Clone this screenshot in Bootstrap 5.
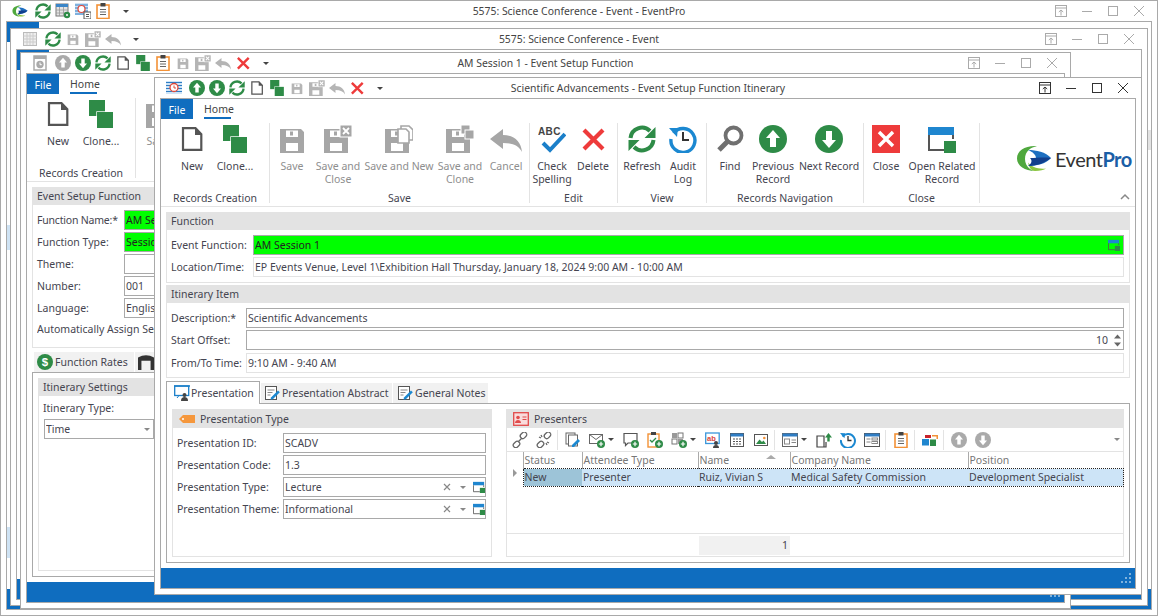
<!DOCTYPE html>
<html lang="en">
<head>
<meta charset="utf-8">
<title>EventPro</title>
<link href="https://cdn.jsdelivr.net/npm/bootstrap@5.3.0/dist/css/bootstrap.min.css" rel="stylesheet">
<style>
html,body{margin:0;padding:0;background:#fff;overflow:hidden;}
body{width:1158px;height:616px;position:relative;font-family:"Noto Sans","Liberation Sans",sans-serif;font-size:10.5px;line-height:13px;color:#454550;}
svg{display:block;flex:none;}
.win{position:absolute;background:#fff;border:1px solid #a9a9a9;display:flex;flex-direction:column;}
.win-a{left:0;top:0;width:1158px;height:616px;z-index:1;}
.win-b{left:10px;top:28px;width:1138px;height:578px;z-index:2;}
.win-c{left:20px;top:52px;width:1051px;height:557px;z-index:3;}
.win-d{left:154px;top:77px;width:988px;height:518px;z-index:4;}
.tbar{height:20px;display:grid;grid-template-columns:1fr auto 1fr;align-items:center;flex:none;}
.ttl{white-space:nowrap;color:#444;font-size:10.4px;padding-top:1px;}
.qat{display:flex;align-items:center;gap:4px;padding-left:11px;}
.qat svg{width:16px;height:16px;}
.qat svg:first-child{margin-right:3px;}
.qat .qc{margin-left:8px;}
.qc,.tcar{width:0;height:0;border-left:3px solid transparent;border-right:3px solid transparent;border-top:3px solid #444;flex:none;}
.wbtns{display:flex;justify-content:flex-end;align-items:center;gap:14px;padding-right:12px;color:#aaa;}
.wbtns svg{width:12px;height:12px;}
.win-d .wbtns{color:#333;}
.client{flex:1;margin:0 5px 5px 5px;border:1px solid #a9a9a9;display:flex;flex-direction:column;min-height:0;overflow:hidden;position:relative;}
.wmain{flex:1;min-height:0;overflow:hidden;}
.stbar{height:20px;background:#0f6dbf;flex:none;display:flex;justify-content:flex-end;align-items:center;padding-right:3px;}
.grip{width:12px;height:10px;}
.rtabs.nav{height:20px;flex-wrap:nowrap;}
.rfile{width:32px;height:20px;background:#0f6dbf;color:#fff;text-align:center;line-height:23px;}
.rhome{margin-left:11px;width:27px;height:20px;line-height:21px;border-bottom:2px solid #0f6dbf;color:#444;white-space:nowrap;}
.ribbon{height:88px;border-bottom:1px solid #e3e3e3;display:flex;padding-top:4px;align-items:flex-start;}
.rgrp{height:80px;border-right:1px solid #e3e3e3;display:flex;flex-direction:column;flex:none;}
.rg1{width:109px;padding-left:11px;}
.rg2{width:260px;}
.rg3{width:88px;}
.rg4{width:89px;padding-left:2px;}
.rg5{width:157px;padding-left:1px;}
.rg6{width:116px;}
.rrow{display:flex;flex:1;}
.rlab{height:13px;text-align:center;white-space:nowrap;color:#454550;margin-bottom:-2px;}
.rg1 .rlab{margin-left:-11px;}
.rg4 .rlab{margin-left:-2px;}
.rg5 .rlab{margin-left:-1px;}
.rbtn.btn{padding:2px 0 0 0;border:0;border-radius:0;font-size:10.5px;line-height:13px;color:#454550;display:flex;flex-direction:column;align-items:center;text-align:center;flex:none;white-space:nowrap;}
.rbtn svg{width:28px;height:28px;margin-bottom:7px;}
.rbtn.off{color:#8e8e8e;}
.rbtn svg.wid32{width:32px;}
.w38{width:38px;}.w40{width:40px;}.w42{width:42px;}.w44{width:44px;}.w46{width:46px;}.w48{width:48px;}.w68{width:68px;}.w70{width:70px;}.w74{width:74px;}
.rlogo{flex:1;display:flex;flex-direction:column;height:80px;padding:22px 3px 0 36px;}
.logo-row{display:flex;align-items:center;gap:3px;}
.logo-row svg{width:36px;height:27px;}
.logo-txt{font-family:"Lato","Liberation Sans",sans-serif;font-size:20px;line-height:26px;color:#333;letter-spacing:-.5px;white-space:nowrap;padding-top:1px;}
.logo-txt b{color:#1b5ea6;font-weight:700;}
.chev{margin-left:auto;margin-top:auto;width:10px;height:7px;margin-right:2px;margin-bottom:3px;}
.wbody{padding:5px 5px 5px 5px;}
.pnl.card{border:1px solid #e3e3e3;border-radius:0;background:#fff;margin-bottom:2px;}
.pnl .card-header{background:#e3e3e3;border:0;border-radius:0;height:17px;flex:none;padding:0 4px 1px;line-height:15px;color:#454550;display:flex;align-items:center;gap:5px;}
.pnl .card-body{padding:5px 5px 5px 4px;}
.pnl.panel-it .card-body{padding-bottom:0;}
.frow{display:flex;height:20px;margin-bottom:2px;line-height:20px;align-items:center;}
.frow:last-child{margin-bottom:0;}
.frow-lo{margin-top:3px;}
.flab{flex:none;white-space:nowrap;}
.tight{letter-spacing:-.2px;}
.l82{width:82px;}.l75{width:75px;}.l106{width:106px;}.l87{width:87px;}
.fld.form-control{flex:1;min-width:0;height:20px;min-height:0;border:1px solid #a9a9a9;border-radius:0;padding:0 0 0 1px;font-size:10.5px;line-height:18px;color:#454550;background:#fff;display:flex;align-items:center;white-space:nowrap;box-shadow:none;}
.fld.ro{border-color:#e3e3e3;}
.fld.grn{background:#00ff00;color:#222;}
.fld-t{flex:1;overflow:hidden;}
.fld svg{width:12px;height:12px;}
.fld .mr3{margin-right:3px;}
.win-c .frow .fld.form-control{flex:none;width:31px;overflow:hidden;}
.win-c .auto{width:117px;overflow:hidden;}
.spin{width:8px;margin:0 1px 0 6px;display:flex;flex-direction:column;gap:3px;}
.spin svg{width:7px;height:5px;}
.panel-fn{height:71px;}
.panel-it{height:93px;}
.dtabs.nav{flex-wrap:nowrap;border:0;height:22px;align-items:flex-end;margin-top:3px;}
.dtab{height:20px;background:#f1f1f1;display:flex;align-items:center;gap:2px;padding:0 0 0 3px;margin-right:1px;white-space:nowrap;}
.dtab svg{width:16px;height:16px;}
.dtab.on{height:23px;background:#fff;border:1px solid #a9a9a9;border-bottom:0;margin-bottom:-1px;position:relative;z-index:1;padding:0 0 0 7px;gap:1px;}
.dw1{width:94px;}.dw2{width:131px;}.dw3{width:95px;padding-left:4px;}
.dpane{border:1px solid #a9a9a9;height:160px;display:flex;padding:5px;gap:14px;}
.pnl2.card{height:148px;margin:0;}
.pl{width:320px;flex:none;}
.pr{flex:1;min-width:0;display:flex;flex-direction:column;}
.pnl2 .card-header{height:18px;padding:0 4px 0 6px;}
.pnl2 .card-header svg{width:16px;height:14px;}
.pnl2.pl .card-body{padding:5px 5px 0 4px;}
.gtools{height:24px;display:flex;align-items:center;padding-left:5px;flex:none;border-bottom:1px solid #e3e3e3;}
.gi{width:16px;height:16px;margin-right:8px;}
.gsep{width:1px;height:20px;background:#e3e3e3;margin:0 7px 0 -3px;flex:none;}
.tcar{margin-left:-5px;margin-right:9px;}
.tend{margin-left:auto;margin-right:3px;border-top-color:#888;}
.gt.table{margin:0;width:616px;table-layout:fixed;font-size:10.5px;--bs-table-bg:transparent;color:#454550;}
.gt th,.gt td{padding:0 0 0 1px;border:0;font-weight:400;white-space:nowrap;height:16px;line-height:16px;overflow:hidden;box-shadow:none;}
.gt thead th{color:#777;height:16px;line-height:16px;position:relative;}
.gt .hs{border-left:1px solid #aaa;}
.gt tbody td{height:18px;line-height:16px;background:#cde4f7;border-top:1px dotted #222;border-bottom:1px dotted #222;}
.gt tbody td.gind{background:#fff;border:0;padding:0;}
.gt tbody td.gsel{background:#9dc4d8;border-left:1px dotted #222;}
.gt tbody td:last-child{border-right:1px dotted #222;}
.tri-r{width:0;height:0;border-top:4px solid transparent;border-bottom:4px solid transparent;border-left:4px solid #999;margin-left:6px;}
.tri-u{position:absolute;right:14px;top:3px;width:0;height:0;border-left:5px solid transparent;border-right:5px solid transparent;border-bottom:4px solid #aaa;}
.gspc{flex:1;}
.gfoot{height:23px;border-top:1px solid #e3e3e3;padding:2px 0 1px 192px;flex:none;}
.gsum{width:91px;height:19px;background:#f1f1f1;text-align:right;padding-right:2px;line-height:19px;}
.bit{position:absolute;background:#cfe3f4;}
.bit1{left:0;top:203px;width:3px;height:25px;}
.bit2{left:0;top:505px;width:3px;height:31px;}
.bit3{right:0;top:108px;width:3px;height:20px;background:#e3e3e3;}
.cbody{padding:5px;}
.cp1{height:161px;}
.ctabs.nav{flex-wrap:nowrap;height:20px;margin-top:4px;border:0;padding-left:2px;align-items:flex-end;}
.ctw1{width:100px;padding-left:3px;}.ctw2{width:19px;}
.cpane{border:1px solid #a9a9a9;height:205px;padding:5px;}
.cp2{height:193px;margin:0;}
.cp2 .card-body{padding:2px 5px 0 4px;}
.csel{margin:-1px 0 0 1px;width:110px;flex:none;}
.auto{height:20px;line-height:18px;white-space:nowrap;}
</style>
</head>
<body>
<svg width="0" height="0" style="position:absolute">
<defs>
<symbol id="i-new" viewBox="0 0 28 28"><path d="M5 3.2h12.5l5.800 6v15.600H5z" fill="#fff" stroke="#555" stroke-width="2.200"/><path d="M17 2.500v7.500h7z" fill="#555"/></symbol>
<symbol id="i-clone" viewBox="0 0 28 28"><rect x="2" y="0" width="16" height="16" fill="#2e8b47"/><rect x="10" y="12" width="16" height="16" fill="#2e8b47" stroke="#fff" stroke-width="1.400" paint-order="stroke"/></symbol>
<symbol id="i-save" viewBox="0 0 28 28"><path fill="currentColor" fill-rule="evenodd" d="M2 4h21l3 3v21H2zM8 5.500v6.500h12V5.500zM8 18v8h12v-8z"/><rect x="12" y="6.500" width="3" height="4" fill="currentColor"/></symbol>
<symbol id="i-savex" viewBox="0 0 28 28"><path fill="currentColor" fill-rule="evenodd" d="M0 4h24v24H0zM6 5.500v6.500h12V5.500zM6 18v8h12v-8z"/><rect x="10" y="6.500" width="3" height="4" fill="currentColor"/><rect x="16" y="0" width="12" height="12" fill="currentColor" stroke="#fff"/><path d="M19 3l6 6M25 3l-6 6" stroke="#fff" stroke-width="1.800"/></symbol>
<symbol id="i-saven" viewBox="0 0 28 28"><path fill="currentColor" fill-rule="evenodd" d="M0 4h24v24H0zM6 5.500v6.500h12V5.500zM6 18v8h12v-8z"/><rect x="10" y="6.500" width="3" height="4" fill="currentColor"/><path d="M16 1h8l4 4v10H16z" fill="#fff" stroke="currentColor" stroke-width="1.600"/><path d="M13 4h8l3 3v11H13z" fill="#fff" stroke="currentColor" stroke-width="1.600"/></symbol>
<symbol id="i-savec" viewBox="0 0 28 28"><path fill="currentColor" fill-rule="evenodd" d="M0 4h24v24H0zM6 5.500v6.500h12V5.500zM6 18v8h12v-8z"/><rect x="10" y="6.500" width="3" height="4" fill="currentColor"/><rect x="15" y="0" width="9" height="9" fill="currentColor" stroke="#fff"/><rect x="19" y="5" width="9" height="9" fill="currentColor" stroke="#fff"/></symbol>
<symbol id="i-undo" viewBox="0 0 32 28"><path fill="currentColor" d="M0 14L13 4v6c11 0 18 6 19 17-3-6-9-9-19-9v6z"/></symbol>
<symbol id="i-abc" viewBox="0 0 28 28"><text x="0" y="10" font-family="Liberation Sans,sans-serif" font-weight="700" font-size="10" fill="#444" letter-spacing=".4">ABC</text><path d="M5 18l7 7L27 9" fill="none" stroke="#1b7fc9" stroke-width="4"/></symbol>
<symbol id="i-x" viewBox="0 0 28 28"><path d="M5 5l19 19M24 5L5 24" fill="none" stroke="#ee3b3b" stroke-width="4.200"/></symbol>
<symbol id="i-ref" viewBox="0 0 28 28"><g fill="none" stroke="#2e8b47" stroke-width="4"><path d="M2.500 13A11.500 11.500 0 0 1 22 6"/><path d="M25.500 15A11.500 11.500 0 0 1 6 22"/></g><path fill="#2e8b47" d="M27.500 2v11h-11zM.5 26V15h11z"/></symbol>
<symbol id="i-audit" viewBox="0 0 28 28"><path d="M4.500 8A12 12 0 1 1 2 14" fill="none" stroke="#1b88d1" stroke-width="3.400"/><path d="M0 3l9 0-1 9z" fill="#1b88d1"/><path d="M14 7v8h6" fill="none" stroke="#333" stroke-width="2"/></symbol>
<symbol id="i-find" viewBox="0 0 28 28"><circle cx="17.500" cy="10.500" r="8" fill="none" stroke="#707070" stroke-width="3.800"/><path d="M11.500 16.500L3 25" stroke="#707070" stroke-width="5"/></symbol>
<symbol id="i-up" viewBox="0 0 28 28"><circle cx="14" cy="14" r="14" fill="currentColor"/><path fill="#fff" d="M14 5l7 8h-4v9h-6v-9H7z"/></symbol>
<symbol id="i-down" viewBox="0 0 28 28"><circle cx="14" cy="14" r="14" fill="currentColor"/><path fill="#fff" d="M14 23l-7-8h4V6h6v9h4z"/></symbol>
<symbol id="i-close" viewBox="0 0 28 28"><rect width="28" height="28" fill="#ee3b3b"/><path d="M7 7l14 14M21 7L7 21" stroke="#fff" stroke-width="3.400"/></symbol>
<symbol id="i-rel" viewBox="0 0 28 28"><rect x="0" y="2" width="26" height="8" fill="#1f86cf"/><path d="M1 10v15h15" fill="none" stroke="#555" stroke-width="2"/><path d="M25 10v4" stroke="#555" stroke-width="2"/><rect x="16" y="16" width="12" height="12" fill="#2e8b47"/></symbol>
<symbol id="i-clip" viewBox="0 0 16 16"><rect x="2" y="2" width="12" height="13.500" fill="#fff" stroke="#f39237" stroke-width="1.600"/><rect x="5.500" y="0" width="5" height="3.500" fill="#444"/><path d="M5 6.500h6M5 9h6M5 11.500h6" stroke="#666" stroke-width="1"/></symbol>
<symbol id="i-griddoc" viewBox="0 0 16 16"><rect x="1" y="1" width="12" height="12" fill="#e4e4e4" stroke="#777"/><rect x="1" y="1" width="12" height="3" fill="#3b86c8"/><path d="M4.500 4v9M8.500 4v9M1 7h12M1 10h12" stroke="#999" stroke-width=".8"/><circle cx="12" cy="12" r="3.200" fill="#2e8b47"/><circle cx="12" cy="12" r="1" fill="#fff"/></symbol>
<symbol id="i-grayg" viewBox="0 0 16 16"><rect x="1.500" y="1.500" width="13" height="13" fill="#eee" stroke="#bbb"/><path d="M1.500 5h13M1.500 8h13M1.500 11h13M5 2v12M8 2v12M11 2v12" stroke="#ccc"/></symbol>
<symbol id="i-sched" viewBox="0 0 16 16"><rect x="0" y="1" width="16" height="13" fill="#cfe4f6"/><path d="M0 2.500h16M0 5.500h16M0 8.500h16M0 11.500h16" stroke="#2f7dc4" stroke-width="1.100"/><circle cx="8" cy="7.500" r="4" fill="#fff" stroke="#e04a3b" stroke-width="1.300"/><path d="M8 5.500v2.500h2" stroke="#e04a3b" fill="none"/></symbol>
<symbol id="i-sched2" viewBox="0 0 16 16"><rect x="0" y="0" width="13" height="12" fill="#cfe4f6"/><path d="M0 2h13M0 5h13M0 8h13M0 11h13" stroke="#2f7dc4"/><circle cx="6.500" cy="6" r="3.500" fill="#fff" stroke="#e04a3b" stroke-width="1.200"/><rect x="9" y="9" width="7" height="7" fill="#fff" stroke="#555"/><path d="M11 11.500h3M11 13.500h3" stroke="#555"/></symbol>
<symbol id="i-clockdoc" viewBox="0 0 16 16"><rect x="2" y="1" width="12" height="14" fill="#fff" stroke="#aaa" stroke-width="1.500"/><rect x="2" y="1" width="12" height="3" fill="#aaa"/><circle cx="8" cy="9.500" r="3.700" fill="#aaa"/><path d="M8 7.500v2.200h1.800" stroke="#fff" fill="none"/></symbol>
<symbol id="i-logo" viewBox="0 0 36 27"><path d="M19 1C8 1 1 6 1 13.500S9 26 19 26c-3 0-10-4-10-12S15 2 21 1.500z" fill="#4fa83d"/><path d="M19 26c5 0 9-1 11-2.500-8 1-15-2-18-6 1 5 3 8 7 8.500z" fill="#8cc63f"/><path d="M12 5c8 0 18 2 23 8-5 6-15 8-23 8 5-2 8-5 8-8s-3-6-8-8z" fill="#1e6fc0"/><path d="M14 13c6 0 14-1 21 0-6 5-15 8-23 8 3-2 5-5 2-8z" fill="#123f8c"/></symbol>
<symbol id="i-pin" viewBox="0 0 12 12"><rect x=".5" y=".5" width="11" height="11" fill="none" stroke="currentColor"/><path d="M.5 3h11M6 10.500V5M3.800 7L6 5l2.200 2" fill="none" stroke="currentColor"/></symbol>
<symbol id="i-min" viewBox="0 0 12 12"><path d="M1 6.500h10" stroke="currentColor"/></symbol>
<symbol id="i-max" viewBox="0 0 12 12"><rect x="1.500" y="1.500" width="9" height="9" fill="none" stroke="currentColor"/></symbol>
<symbol id="i-wx" viewBox="0 0 12 12"><path d="M1 1l10 10M11 1L1 11" stroke="currentColor" fill="none"/></symbol>
<symbol id="i-pres" viewBox="0 0 16 16"><rect x=".7" y="1" width="14" height="9.500" fill="#fff" stroke="#1b7fc9" stroke-width="1.300"/><path d="M0 1h16" stroke="#1b7fc9" stroke-width="1.500"/><circle cx="10.500" cy="10" r="2" fill="#444"/><path d="M7 16c0-3 1.500-4 3.500-4s3.500 1 3.500 4z" fill="#444"/><path d="M3 13l2-2.500" stroke="#1b7fc9"/></symbol>
<symbol id="i-note" viewBox="0 0 16 16"><rect x="1.500" y="1.500" width="11" height="13" fill="#fff" stroke="#555"/><path d="M3.500 5h7M3.500 7.500h5M3.500 10h3" stroke="#888"/><path d="M7 12.500l7-7 1.800 1.800-7 7-2.300.5z" fill="#1b88d1"/></symbol>
<symbol id="i-tag" viewBox="0 0 16 14"><path d="M0 7l4-4h12v8H4z" fill="#f5973c"/><circle cx="4" cy="7" r="1" fill="#fff"/></symbol>
<symbol id="i-card" viewBox="0 0 16 14"><rect x=".7" y=".7" width="14.600" height="12.600" fill="#f9dcdc" stroke="#e14b4b" stroke-width="1.300"/><circle cx="5" cy="5.500" r="1.800" fill="#e14b4b"/><path d="M2 11c0-2 1.500-3 3-3s3 1 3 3z" fill="#e14b4b"/><path d="M9.500 5h4M9.500 7.500h4" stroke="#e14b4b"/></symbol>
<symbol id="i-link" viewBox="0 0 16 16"><g fill="none" stroke="#666" stroke-width="1.300"><rect x="8" y=".8" width="7" height="5" rx="2.400" transform="rotate(-45 11.500 3.300)"/><rect x="1" y="10" width="7" height="5" rx="2.400" transform="rotate(-45 4.500 12.500)"/><path d="M6 10l4-4"/></g></symbol>
<symbol id="i-unlink" viewBox="0 0 16 16"><g fill="none" stroke="#666" stroke-width="1.300"><rect x="8" y=".8" width="7" height="5" rx="2.400" transform="rotate(-45 11.500 3.300)"/><rect x="1" y="10" width="7" height="5" rx="2.400" transform="rotate(-45 4.500 12.500)"/><path d="M5 3l1 2M3 5l2 1M11 13l-1-2M13 11l-2-1"/></g></symbol>
<symbol id="i-copy" viewBox="0 0 16 16"><rect x="1" y="1" width="9" height="11" fill="#fff" stroke="#666"/><rect x="3.500" y="3" width="9" height="11" fill="#fff" stroke="#666"/><path d="M7 13l6-6 2 2-6 6H7z" fill="#1b88d1"/></symbol>
<symbol id="i-mail" viewBox="0 0 16 16"><rect x=".5" y="2.500" width="13" height="9" fill="#fff" stroke="#666"/><path d="M.5 2.500l6.500 5 6.500-5" fill="none" stroke="#666"/><circle cx="12" cy="12" r="4" fill="#2e8b47"/><path d="M12 9.800v4.400M9.800 12h4.400" stroke="#fff" stroke-width="1.200"/></symbol>
<symbol id="i-cmt" viewBox="0 0 16 16"><path d="M1 1.500h13V11H5l-2.500 2.500V11H1z" fill="#fff" stroke="#555" stroke-width="1.200"/><circle cx="12" cy="12" r="4" fill="#2e8b47"/><path d="M12 9.800v4.400M9.800 12h4.400" stroke="#fff" stroke-width="1.200"/></symbol>
<symbol id="i-clipc" viewBox="0 0 16 16"><rect x="1" y="2" width="11" height="13" fill="#fff" stroke="#f39237" stroke-width="1.400"/><rect x="4" y="0" width="5" height="3" fill="#444"/><path d="M3 8l2 2 4-4" fill="none" stroke="#2e8b47" stroke-width="1.300"/><circle cx="12" cy="12" r="4" fill="#2e8b47"/><path d="M12 9.800v4.400M9.800 12h4.400" stroke="#fff" stroke-width="1.200"/></symbol>
<symbol id="i-gridp" viewBox="0 0 16 16"><rect x="1" y="1" width="5" height="5" fill="#999"/><rect x="7" y="1" width="5" height="5" fill="#fff" stroke="#777"/><rect x="1" y="7" width="5" height="5" fill="#fff" stroke="#777"/><rect x="7" y="7" width="5" height="5" fill="#999"/><circle cx="12" cy="12" r="4" fill="#2e8b47"/><path d="M12 9.800v4.400M9.800 12h4.400" stroke="#fff" stroke-width="1.200"/></symbol>
<symbol id="i-scr" viewBox="0 0 16 16"><rect x=".7" y="1" width="13.500" height="10.500" fill="#fff" stroke="#3b96da" stroke-width="1.300"/><text x="2" y="8.500" font-family="Liberation Sans,sans-serif" font-weight="700" font-size="7.500" fill="#d9423a">ab</text><circle cx="11" cy="11" r="2" fill="#444"/><path d="M8 16c0-2 1-3 3-3s3 1 3 3z" fill="#444"/></symbol>
<symbol id="i-tbl" viewBox="0 0 16 16"><rect x="1.500" y="1.500" width="13" height="13" fill="#fff" stroke="#555"/><rect x="1.500" y="1.500" width="13" height="3" fill="#2f7dc4"/><path d="M4 7h2M7 7h2M10 7h2M4 9.500h2M7 9.500h2M10 9.500h2M4 12h2M7 12h2M10 12h2" stroke="#555" stroke-width="1.200"/></symbol>
<symbol id="i-img" viewBox="0 0 16 16"><rect x="1.500" y="2.500" width="13" height="11" fill="#fff" stroke="#555"/><path d="M3 12l3.500-4.500L9 10l1.500-1.500L13 12z" fill="#2e8b47"/><circle cx="11.300" cy="6" r="1.300" fill="#f39237"/></symbol>
<symbol id="i-wnd" viewBox="0 0 16 16"><rect x=".5" y="1.500" width="15" height="13" fill="#fff" stroke="#666"/><rect x=".5" y="1.500" width="15" height="3" fill="#2f7dc4"/><rect x="2.500" y="7" width="5" height="5" fill="none" stroke="#888"/><path d="M9.500 8h4.500M9.500 10.500h4.500" stroke="#888"/></symbol>
<symbol id="i-docup" viewBox="0 0 16 16"><path d="M1 4h7v11H1z M10 10v5H5" fill="#fff" stroke="#444" stroke-width="1.200"/><path d="M9 5.500l3.500-4.500L16 5.500h-2.300v4h-2.400v-4z" fill="#2e8b47"/></symbol>
<symbol id="i-hist" viewBox="0 0 16 16"><path d="M2.500 4.500A7 7 0 1 1 1 8" fill="none" stroke="#1b88d1" stroke-width="2"/><path d="M0 1l5 .3-.5 5z" fill="#1b88d1"/><path d="M8 4v4.500h3.500" fill="none" stroke="#333" stroke-width="1.300"/></symbol>
<symbol id="i-form" viewBox="0 0 16 16"><rect x=".5" y="1.500" width="15" height="13" fill="#fff" stroke="#555"/><rect x=".5" y="1.500" width="15" height="3" fill="#2f7dc4"/><path d="M2.500 7h4M2.500 10h4" stroke="#888"/><rect x="8" y="6" width="5.500" height="2" fill="none" stroke="#888"/><rect x="8" y="9.500" width="5.500" height="2" fill="none" stroke="#888"/></symbol>
<symbol id="i-blocks" viewBox="0 0 16 12"><rect x="0" y="5" width="7" height="6.500" fill="#1f86cf"/><rect x="8" y="5.500" width="6" height="6.500" fill="#2e8b47"/><rect x="3" y="1" width="6" height="3" fill="#c8232c"/><path d="M10 1h6v4h-1.500V2.500H10z" fill="#f39237"/></symbol>
<symbol id="i-grip" viewBox="0 0 12 10"><g fill="#7fb2dd"><rect x="9" y="0" width="2" height="2"/><rect x="5" y="4" width="2" height="2"/><rect x="9" y="4" width="2" height="2"/><rect x="1" y="8" width="2" height="2"/><rect x="5" y="8" width="2" height="2"/><rect x="9" y="8" width="2" height="2"/></g></symbol>
<symbol id="i-chev" viewBox="0 0 10 7"><path d="M1 6l4-4 4 4" fill="none" stroke="#888" stroke-width="1.500"/></symbol>
<symbol id="i-cx" viewBox="0 0 12 12"><path d="M3 3l6 6M9 3l-6 6" stroke="#888" stroke-width="1.200"/></symbol>
<symbol id="i-ctri" viewBox="0 0 12 12"><path d="M3 5h6L6 8z" fill="#888"/></symbol>
<symbol id="i-spu" viewBox="0 0 7 5"><path d="M3.500 .5L7 4.500H0z" fill="#666"/></symbol>
<symbol id="i-spd" viewBox="0 0 7 5"><path d="M3.500 4.500L0 .5h7z" fill="#666"/></symbol>
<symbol id="i-fn" viewBox="0 0 14 14"><circle cx="7" cy="7" r="7" fill="#2e8b47"/><text x="7" y="10.500" text-anchor="middle" font-family="Liberation Sans,sans-serif" font-weight="700" font-size="10" fill="#fff">$</text></symbol>
<symbol id="i-seat" viewBox="0 0 14 14"><path d="M0 3q7-4 14 0v11h-3V6H3v8H0z" fill="#333"/></symbol>
</defs>
</svg>

<!-- outermost window -->
<div class="win win-a">
  <div class="tbar">
    <div class="qat"><svg viewBox="0 0 36 27"><use href="#i-logo"/></svg><svg><use href="#i-ref"/></svg><svg><use href="#i-griddoc"/></svg><svg><use href="#i-sched2"/></svg><svg><use href="#i-clip"/></svg><span class="qc"></span></div>
    <div class="ttl">5575: Science Conference - Event - EventPro</div>
    <div class="wbtns"><svg><use href="#i-pin"/></svg><svg><use href="#i-min"/></svg><svg><use href="#i-max"/></svg><svg><use href="#i-wx"/></svg></div>
  </div>
  <div class="client">
    <div class="wmain"><div class="rtabs nav"><div class="rfile">File</div></div></div>
    <i class="bit bit1"></i><i class="bit bit2"></i><i class="bit bit3"></i>
    <div class="stbar"></div>
  </div>
</div>

<!-- second window -->
<div class="win win-b">
  <div class="tbar">
    <div class="qat"><svg><use href="#i-grayg"/></svg><svg><use href="#i-ref"/></svg><svg viewBox="-4 -4 36 36" style="color:#b5b5b5"><use href="#i-save" width="28" height="28"/></svg><svg style="color:#b5b5b5"><use href="#i-savex"/></svg><svg style="color:#b5b5b5"><use href="#i-undo"/></svg><span class="qc"></span></div>
    <div class="ttl">5575: Science Conference - Event</div>
    <div class="wbtns"><svg><use href="#i-pin"/></svg><svg><use href="#i-min"/></svg><svg><use href="#i-max"/></svg><svg><use href="#i-wx"/></svg></div>
  </div>
  <div class="client">
    <div class="wmain"><div class="rtabs nav"><div class="rfile">File</div></div></div>
    <div class="stbar"></div>
  </div>
</div>

<!-- third window -->
<div class="win win-c">
  <div class="tbar">
    <div class="qat"><svg><use href="#i-clockdoc"/></svg><svg style="color:#aaa"><use href="#i-up"/></svg><svg style="color:#2e8b47"><use href="#i-down"/></svg><svg><use href="#i-ref"/></svg><svg><use href="#i-new"/></svg><svg><use href="#i-clone"/></svg><svg><use href="#i-clip"/></svg><svg viewBox="-4 -4 36 36" style="color:#b5b5b5"><use href="#i-save" width="28" height="28"/></svg><svg style="color:#b5b5b5"><use href="#i-savex"/></svg><svg style="color:#b5b5b5"><use href="#i-undo"/></svg><svg><use href="#i-x"/></svg><span class="qc"></span></div>
    <div class="ttl">AM Session 1 - Event Setup Function</div>
    <div class="wbtns"><svg><use href="#i-pin"/></svg><svg><use href="#i-min"/></svg><svg><use href="#i-max"/></svg><svg><use href="#i-wx"/></svg></div>
  </div>
  <div class="client">
    <div class="wmain">
      <div class="rtabs nav"><div class="rfile">File</div><div class="rhome">Home</div></div>
      <div class="ribbon">
        <div class="rgrp rg1">
          <div class="rrow">
            <div class="rbtn btn w40"><svg><use href="#i-new"/></svg>New</div>
            <div class="rbtn btn w46"><svg><use href="#i-clone"/></svg>Clone...</div>
          </div>
          <div class="rlab">Records Creation</div>
        </div>
        <div class="rgrp rg2">
          <div class="rrow"><div class="rbtn btn off w44"><svg style="color:#a6a6a6"><use href="#i-save"/></svg>Save</div></div>
        </div>
      </div>
      <div class="cbody">
        <div class="pnl card cp1">
          <div class="card-header">Event Setup Function</div>
          <div class="card-body">
            <div class="frow"><span class="flab l87 tight">Function Name:*</span><div class="fld grn form-control">AM Session 1</div></div>
            <div class="frow"><span class="flab l87">Function Type:</span><div class="fld grn form-control">Session</div></div>
            <div class="frow"><span class="flab l87">Theme:</span><div class="fld form-control"></div></div>
            <div class="frow"><span class="flab l87">Number:</span><div class="fld form-control">001</div></div>
            <div class="frow"><span class="flab l87">Language:</span><div class="fld form-control">English</div></div>
            <div class="auto">Automatically Assign Seating</div>
          </div>
        </div>
        <div class="ctabs nav">
          <div class="dtab ctw1"><svg><use href="#i-fn"/></svg>Function Rates</div>
          <div class="dtab ctw2"><svg><use href="#i-seat"/></svg></div>
        </div>
        <div class="cpane">
          <div class="pnl card cp2">
            <div class="card-header">Itinerary Settings</div>
            <div class="card-body">
              <div class="frow"><span class="flab">Itinerary Type:</span></div>
              <div class="fld form-control csel"><span class="fld-t">Time</span><svg><use href="#i-ctri"/></svg></div>
            </div>
          </div>
        </div>
      </div>
    </div>
    <div class="stbar"><svg class="grip"><use href="#i-grip"/></svg></div>
  </div>
</div>

<!-- active window -->
<div class="win win-d">
  <div class="tbar">
    <div class="qat"><svg><use href="#i-sched"/></svg><svg style="color:#2e8b47"><use href="#i-up"/></svg><svg style="color:#2e8b47"><use href="#i-down"/></svg><svg><use href="#i-ref"/></svg><svg><use href="#i-new"/></svg><svg><use href="#i-clone"/></svg><svg viewBox="-4 -4 36 36" style="color:#b5b5b5"><use href="#i-save" width="28" height="28"/></svg><svg style="color:#b5b5b5"><use href="#i-savex"/></svg><svg style="color:#b5b5b5"><use href="#i-undo"/></svg><svg><use href="#i-x"/></svg><span class="qc"></span></div>
    <div class="ttl">Scientific Advancements - Event Setup Function Itinerary</div>
    <div class="wbtns"><svg><use href="#i-pin"/></svg><svg><use href="#i-min"/></svg><svg><use href="#i-max"/></svg><svg><use href="#i-wx"/></svg></div>
  </div>
  <div class="client">
    <div class="wmain">
      <div class="rtabs nav"><div class="rfile">File</div><div class="rhome">Home</div></div>
      <div class="ribbon">
        <div class="rgrp rg1">
          <div class="rrow">
            <div class="rbtn btn w40"><svg><use href="#i-new"/></svg>New</div>
            <div class="rbtn btn w46"><svg><use href="#i-clone"/></svg>Clone...</div>
          </div>
          <div class="rlab">Records Creation</div>
        </div>
        <div class="rgrp rg2">
          <div class="rrow">
            <div class="rbtn btn off w44"><svg style="color:#a6a6a6"><use href="#i-save"/></svg>Save</div>
            <div class="rbtn btn off w48"><svg style="color:#a6a6a6"><use href="#i-savex"/></svg>Save and<br>Close</div>
            <div class="rbtn btn off w74"><svg style="color:#a6a6a6"><use href="#i-saven"/></svg>Save and New</div>
            <div class="rbtn btn off w48"><svg style="color:#a6a6a6"><use href="#i-savec"/></svg>Save and<br>Clone</div>
            <div class="rbtn btn off w44"><svg class="wid32" style="color:#a6a6a6"><use href="#i-undo"/></svg>Cancel</div>
          </div>
          <div class="rlab">Save</div>
        </div>
        <div class="rgrp rg3">
          <div class="rrow">
            <div class="rbtn btn w44"><svg><use href="#i-abc"/></svg>Check<br>Spelling</div>
            <div class="rbtn btn w38"><svg><use href="#i-x"/></svg>Delete</div>
          </div>
          <div class="rlab">Edit</div>
        </div>
        <div class="rgrp rg4">
          <div class="rrow">
            <div class="rbtn btn w44"><svg><use href="#i-ref"/></svg>Refresh</div>
            <div class="rbtn btn w38"><svg><use href="#i-audit"/></svg>Audit<br>Log</div>
          </div>
          <div class="rlab">View</div>
        </div>
        <div class="rgrp rg5">
          <div class="rrow">
            <div class="rbtn btn w44"><svg><use href="#i-find"/></svg>Find</div>
            <div class="rbtn btn w42"><svg style="color:#2e8b47"><use href="#i-up"/></svg>Previous<br>Record</div>
            <div class="rbtn btn w70"><svg style="color:#2e8b47"><use href="#i-down"/></svg>Next Record</div>
          </div>
          <div class="rlab">Records Navigation</div>
        </div>
        <div class="rgrp rg6">
          <div class="rrow">
            <div class="rbtn btn w44"><svg><use href="#i-close"/></svg>Close</div>
            <div class="rbtn btn w68"><svg><use href="#i-rel"/></svg>Open Related<br>Record</div>
          </div>
          <div class="rlab">Close</div>
        </div>
        <div class="rlogo">
          <div class="logo-row"><svg><use href="#i-logo"/></svg><span class="logo-txt">Event<b>Pro</b></span></div>
          <svg class="chev"><use href="#i-chev"/></svg>
        </div>
      </div>
      <div class="wbody">
        <div class="pnl card panel-fn">
          <div class="card-header">Function</div>
          <div class="card-body">
            <div class="frow"><span class="flab l82">Event Function:</span><div class="fld grn form-control"><span class="fld-t">AM Session 1</span><svg class="mr3"><use href="#i-rel"/></svg></div></div>
            <div class="frow"><span class="flab l82">Location/Time:</span><div class="fld ro form-control">EP Events Venue, Level 1\Exhibition Hall Thursday, January 18, 2024 9:00 AM - 10:00 AM</div></div>
          </div>
        </div>
        <div class="pnl card panel-it">
          <div class="card-header">Itinerary Item</div>
          <div class="card-body">
            <div class="frow"><span class="flab l75">Description:*</span><div class="fld form-control">Scientific Advancements</div></div>
            <div class="frow"><span class="flab l75">Start Offset:</span><div class="fld form-control"><span class="fld-t text-end">10</span><span class="spin"><svg><use href="#i-spu"/></svg><svg><use href="#i-spd"/></svg></span></div></div>
            <div class="frow frow-lo"><span class="flab l75">From/To Time:</span><div class="fld ro form-control">9:10 AM - 9:40 AM</div></div>
          </div>
        </div>
        <div class="dtabs nav">
          <div class="dtab on dw1"><svg><use href="#i-pres"/></svg>Presentation</div>
          <div class="dtab dw2"><svg><use href="#i-note"/></svg>Presentation Abstract</div>
          <div class="dtab dw3"><svg><use href="#i-note"/></svg>General Notes</div>
        </div>
        <div class="dpane">
          <div class="pnl pnl2 pl card">
            <div class="card-header"><svg><use href="#i-tag"/></svg>Presentation Type</div>
            <div class="card-body">
              <div class="frow"><span class="flab l106">Presentation ID:</span><div class="fld form-control">SCADV</div></div>
              <div class="frow"><span class="flab l106">Presentation Code:</span><div class="fld form-control">1.3</div></div>
              <div class="frow"><span class="flab l106">Presentation Type:</span><div class="fld form-control"><span class="fld-t">Lecture</span><svg><use href="#i-cx"/></svg><svg class="ms-1"><use href="#i-ctri"/></svg><svg class="ms-1 me-0"><use href="#i-rel"/></svg></div></div>
              <div class="frow"><span class="flab l106">Presentation Theme:</span><div class="fld form-control"><span class="fld-t">Informational</span><svg><use href="#i-cx"/></svg><svg class="ms-1"><use href="#i-ctri"/></svg><svg class="ms-1 me-0"><use href="#i-rel"/></svg></div></div>
            </div>
          </div>
          <div class="pnl pnl2 pr card">
            <div class="card-header"><svg><use href="#i-card"/></svg>Presenters</div>
            <div class="gtools">
              <svg class="gi"><use href="#i-link"/></svg><svg class="gi"><use href="#i-unlink"/></svg><span class="gsep"></span>
              <svg class="gi"><use href="#i-copy"/></svg><svg class="gi"><use href="#i-mail"/></svg><span class="tcar"></span>
              <svg class="gi"><use href="#i-cmt"/></svg><svg class="gi"><use href="#i-clipc"/></svg><svg class="gi"><use href="#i-gridp"/></svg><span class="tcar"></span>
              <svg class="gi"><use href="#i-scr"/></svg><svg class="gi"><use href="#i-tbl"/></svg><svg class="gi"><use href="#i-img"/></svg><span class="gsep"></span>
              <svg class="gi"><use href="#i-wnd"/></svg><span class="tcar"></span>
              <svg class="gi"><use href="#i-docup"/></svg><svg class="gi"><use href="#i-hist"/></svg><svg class="gi"><use href="#i-form"/></svg><span class="gsep"></span>
              <svg class="gi"><use href="#i-clip"/></svg><span class="gsep"></span>
              <svg class="gi" viewBox="0 0 16 12"><use href="#i-blocks"/></svg><span class="gsep"></span>
              <svg class="gi" style="color:#aaa"><use href="#i-up"/></svg><svg class="gi" style="color:#aaa"><use href="#i-down"/></svg>
              <span class="tcar tend"></span>
            </div>
            <table class="gt table">
              <colgroup><col style="width:16px"><col style="width:59px"><col style="width:116px"><col style="width:92px"><col style="width:178px"><col style="width:155px"></colgroup>
              <thead><tr><th></th><th class="hs">Status</th><th class="hs">Attendee Type</th><th class="hs">Name<span class="tri-u"></span></th><th class="hs">Company Name</th><th class="hs">Position</th></tr></thead>
              <tbody><tr><td class="gind"><div class="tri-r"></div></td><td class="gsel">New</td><td>Presenter</td><td>Ruiz, Vivian S</td><td>Medical Safety Commission</td><td>Development Specialist</td></tr></tbody>
            </table>
            <div class="gspc"></div>
            <div class="gfoot"><div class="gsum">1</div></div>
          </div>
        </div>
      </div>
    </div>
    <div class="stbar"><svg class="grip"><use href="#i-grip"/></svg></div>
  </div>
</div>
<script src="https://cdn.jsdelivr.net/npm/bootstrap@5.3.0/dist/js/bootstrap.bundle.min.js"></script>
</body>
</html>
